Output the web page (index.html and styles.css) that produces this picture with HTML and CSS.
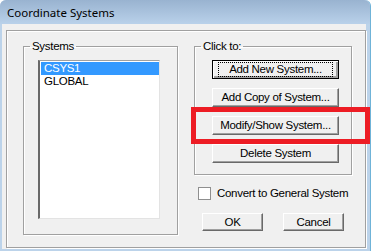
FILE: index.html
```html
<!DOCTYPE html>
<html lang="en">
<head>
  <meta charset="UTF-8">
  <meta name="viewport" content="width=device-width, initial-scale=1.0">
  <title>Coordinate Systems</title>
  <link rel="stylesheet" href="styles.css">
</head>
<body>

  <div class="window">
    <div class="titlebar">Coordinate Systems</div>

    <div class="client">
      <div class="frame">

        <!-- Lista de sistemas -->
        <fieldset class="group systems">
          <legend>Systems</legend>
          <ul class="listbox">
            <li class="selected">CSYS1</li>
            <li>GLOBAL</li>
          </ul>
        </fieldset>

        <div class="side">
          <fieldset class="group actions">
            <legend>Click to:</legend>
            <button class="btn default"><span class="focus">Add New System...</span></button>
            <button class="btn">Add Copy of System...</button>
            <div class="marked">
              <button class="btn">Modify/Show System...</button>
              <div class="highlight"></div>
            </div>
            <button class="btn">Delete System</button>
          </fieldset>

          <label class="check"><span class="box"></span>Convert to General System</label>

          <div class="footer">
            <button class="btn small">OK</button>
            <button class="btn small">Cancel</button>
          </div>
        </div>

      </div>
    </div>
  </div>

</body>
</html>
```

FILE: styles.css
```css
* {
  margin: 0;
  padding: 0;
  box-sizing: border-box;
}
html, body {
  width: 100%;
  height: 100%;
  background-color: #fff;
}
body {
  font-family: 'Liberation Sans', Arial, sans-serif;
  font-size: 11.5px;
  letter-spacing: -0.3px;
  white-space: nowrap;
  color: #000;
}
.window {
  width: 371px;
  height: 251px;
  background-color: #bcd3ea;
  border-radius: 6px 6px 0 0;
  display: flex;
  flex-direction: column;
  padding: 0 4px 2px 2px;
  border-right: 1px solid #6fb3d8;
}
.titlebar {
  height: 24px;
  margin: 0 -4px 0 -2px;
  padding: 5px 0 0 7px;
  font-family: 'Noto Sans', sans-serif;
  font-size: 11.5px;
  letter-spacing: 0;
  line-height: 15px;
  color: #000;
  border-radius: 6px 6px 0 0;
  background: linear-gradient(to bottom, #99b3d0, #b9d1ea);
}
.client {
  flex: 1;
  background-color: #f0f0f0;
  padding: 6px 1px 1px 4px;
}

/* Moldura em relevo */
.frame {
  height: 218px;
  width: 360px;
  border: 1px solid #a0a0a0;
  box-shadow: inset 1px 1px #fff, 1px 1px #fff;
  display: flex;
  padding: 8px 0 0 16px;
  gap: 16px;
}
.group {
  border: 1px solid #a0a0a0;
  box-shadow: inset 1px 1px #fff, 1px 1px #fff;
  min-width: 0;
  padding-left: 6px;
}
.group legend {
  padding: 0 2px;
  line-height: 14px;
}
.systems {
  width: 155px;
  height: 196px;
  padding-top: 7px;
}
.listbox {
  list-style: none;
  width: 122px;
  height: 159px;
  margin-left: 8px;
  background-color: #fff;
  border-top: 1px solid #a0a0a0;
  border-left: 2px solid #696969;
  border-right: 1px solid #e3e3e3;
  border-bottom: 1px solid #e3e3e3;
  padding: 1px 0 0 1px;
}
.listbox li {
  height: 13px;
  line-height: 13px;
  padding-left: 3px;
}
.listbox .selected {
  background-color: #3399ff;
  color: #fff;
}

.side {
  display: flex;
  flex-direction: column;
}
.actions {
  width: 158px;
  height: 136px;
  padding-top: 7px;
  display: flex;
  flex-direction: column;
  gap: 9px;
}
.actions .btn, .marked {
  margin-left: 11px;
}
.marked .btn {
  margin-left: 0;
}
.btn {
  width: 127px;
  height: 19px;
  font-family: 'Liberation Sans', Arial, sans-serif;
  font-size: 11.5px;
  letter-spacing: -0.3px;
  white-space: nowrap;
  color: #000;
  background-color: #f0f0f0;
  border: 1px solid;
  border-color: #fff #696969 #696969 #fff;
  box-shadow: inset -1px -1px #a0a0a0;
  border-radius: 0;
  line-height: 15px;
}
.btn.default {
  border-color: #000;
  box-shadow: inset 1px 1px #fff, inset -2px -2px #a0a0a0, inset -1px -1px #696969;
}
.btn .focus {
  display: inline-block;
  outline: 1px dotted #000;
  padding: 0 10px;
  line-height: 13px;
}
.marked {
  position: relative;
}
.highlight {
  position: absolute;
  left: -21px;
  right: -19px;
  top: -9px;
  bottom: -9px;
  border: 5px solid #ed1c24;
}

.check {
  display: flex;
  align-items: center;
  gap: 6px;
  margin: 11px 0 0 4px;
  line-height: 14px;
}
.check .box {
  width: 13px;
  height: 13px;
  background-color: #fff;
  border: 1px solid #8f8f8f;
}
.footer {
  display: flex;
  gap: 20px;
  margin: 13px 0 0 8px;
}
.btn.small {
  width: 61px;
  height: 18px;
}
```
